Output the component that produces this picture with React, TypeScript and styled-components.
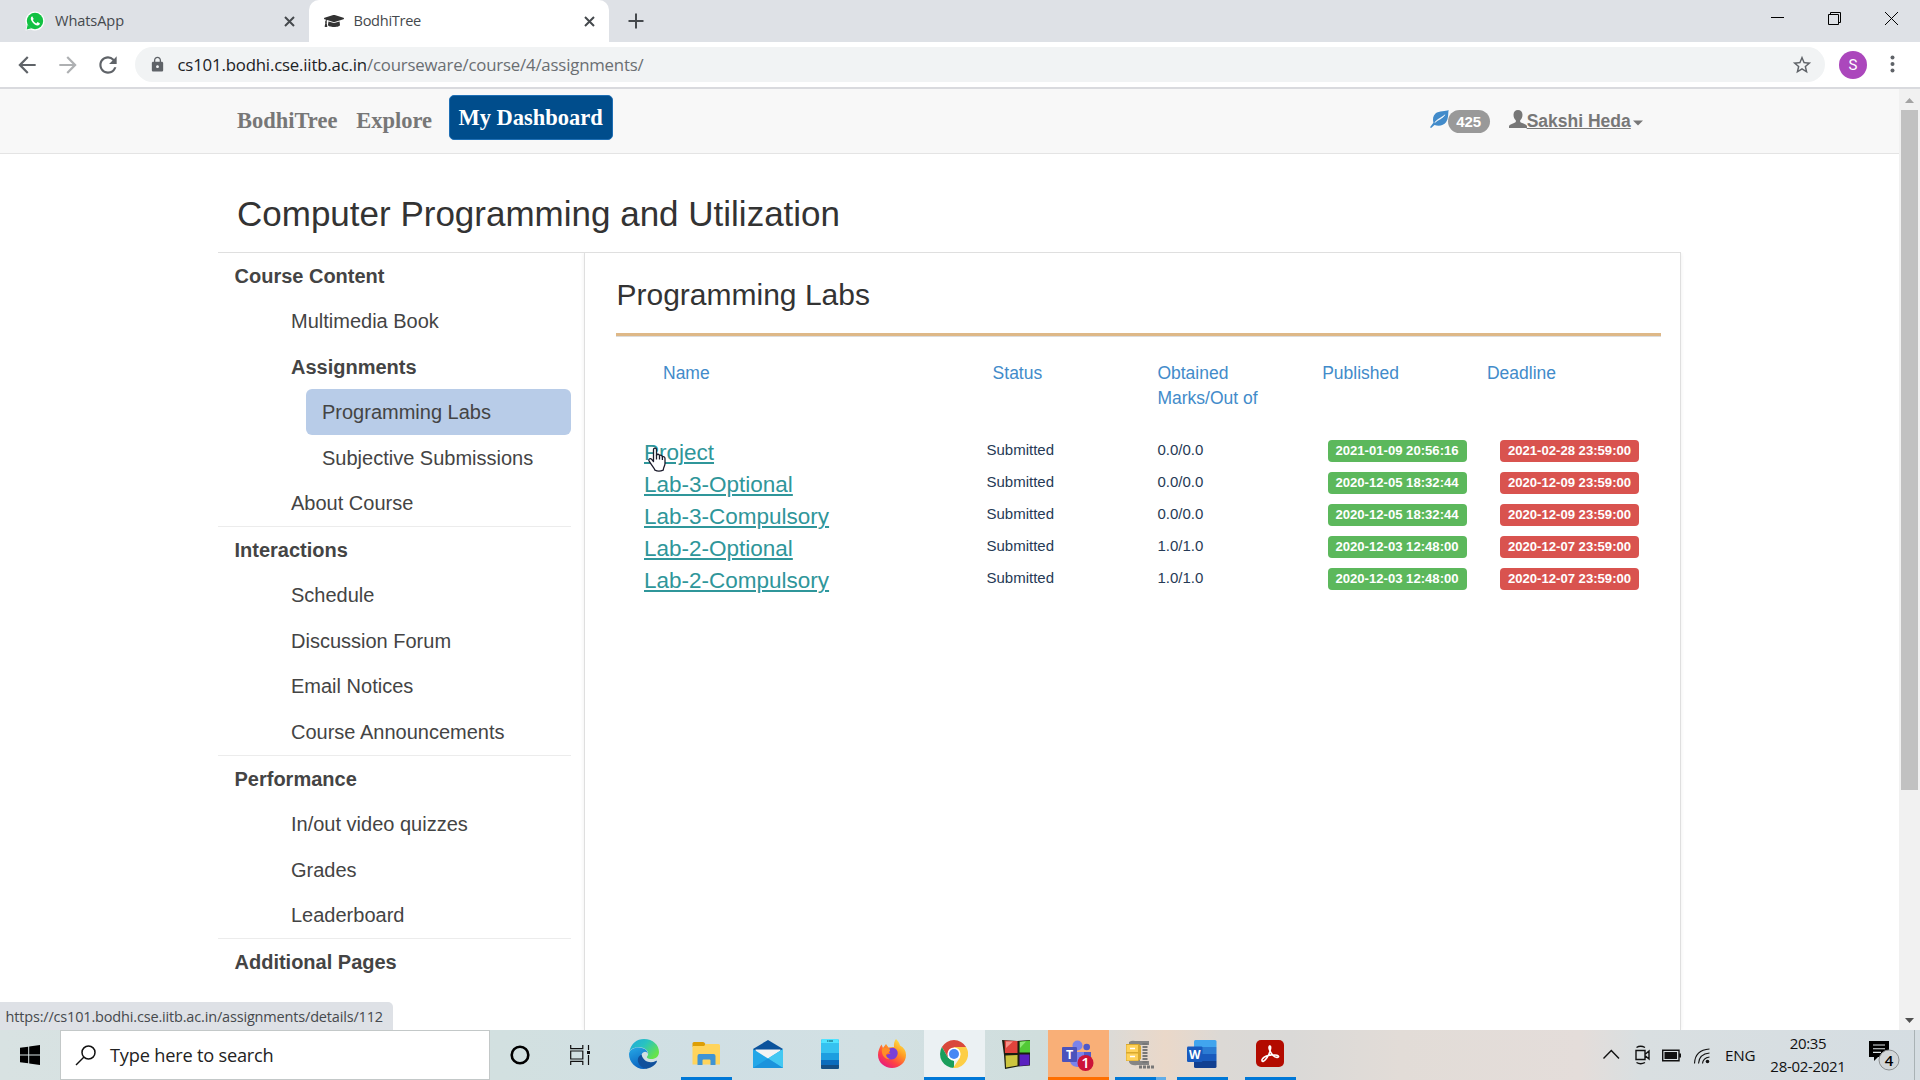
import React from "react";
import styled, { createGlobalStyle } from "styled-components";
import { FaGraduationCap } from "react-icons/fa";
import { MdArrowBack, MdArrowForward, MdLock, MdRefresh, MdStarBorder } from "react-icons/md";

const SEGOE = `"Open Sans", "Noto Sans", sans-serif`;
const ARIAL = `"Liberation Sans", Arial, sans-serif`;
const TIMES = `"Liberation Serif", "Times New Roman", serif`;

const Global = createGlobalStyle`
  * { box-sizing: border-box; }
  body { margin: 0; overflow: hidden; background: #fff; }
  svg { display: block; flex: none; }
`;

const Screen = styled.div`
  display: flex;
  flex-direction: column;
  width: 1920px;
  height: 1080px;
  font-family: ${ARIAL};
  overflow: hidden;
  position: relative;
`;

/* ---------- browser chrome ---------- */
const TabStrip = styled.div`
  display: flex;
  align-items: stretch;
  height: 42px;
  background: #dee1e6;
  flex: none;
`;
const Tab = styled.div<{ $active?: boolean; $width: number; $pad: number }>`
  display: flex;
  align-items: center;
  width: ${(p) => p.$width}px;
  padding: 0 14px 0 ${(p) => p.$pad}px;
  background: ${(p) => (p.$active ? "#fff" : "transparent")};
  border-radius: 10px 10px 0 0;
  color: #45494d;
`;
const TabTitle = styled.span<{ $track: number; $gap: number }>`
  flex: 1;
  margin: -2px 0 0 ${(p) => p.$gap}px;
  font: 14.6px/20px ${SEGOE};
  letter-spacing: ${(p) => p.$track}px;
  white-space: nowrap;
`;
const NewTab = styled.div`
  display: flex;
  align-items: center;
  padding-left: 19px;
  flex: 1;
`;
const WindowButtons = styled.div`
  display: flex;
  align-items: center;
  gap: 44px;
  padding: 0 22px 6px 0;
`;
const Toolbar = styled.div`
  display: flex;
  align-items: center;
  height: 47px;
  padding: 0 17px 2px 14px;
  background: #fff;
  border-bottom: 2px solid #d9dade;
  flex: none;
`;
const NavButtons = styled.div`
  display: flex;
  align-items: center;
  gap: 14.5px;
  width: 121px;
  color: #5f6368;
  padding-top: 2px;
`;
const Faded = styled.span`
  opacity: 0.5;
`;
const Omnibox = styled.div`
  display: flex;
  align-items: center;
  width: 1690px;
  height: 35px;
  margin-top: 2px;
  padding: 0 12px 0 14px;
  border-radius: 18px;
  background: #f1f3f4;
  color: #5f6368;
`;
const Url = styled.span`
  flex: 1;
  margin-left: 11.5px;
  font: 16.8px/24px ${SEGOE};
  letter-spacing: -0.18px;
  color: #6a6e72;
  white-space: nowrap;
  b { font-weight: 400; color: #202124; }
`;
const Avatar = styled.div`
  width: 28px;
  height: 28px;
  margin: 2px 23px 0 14px;
  border-radius: 50%;
  background: #ab47bc;
  color: #fff;
  font: 15px/28px Roboto, sans-serif;
  text-align: center;
`;

/* ---------- page ---------- */
const Body = styled.div`
  display: flex;
  height: 941px;
  flex: none;
`;
const Page = styled.div`
  flex: 1;
  background: #fff;
  overflow: hidden;
`;
const ScrollTrack = styled.div`
  display: flex;
  flex-direction: column;
  align-items: center;
  justify-content: space-between;
  width: 21px;
  padding: 0 0 7px;
  background: #f1f1f1;
`;
const ScrollTop = styled.div`
  display: flex;
  flex-direction: column;
  align-items: center;
  gap: 7px;
  padding-top: 9px;
`;
const ScrollThumb = styled.div`
  width: 17px;
  height: 680px;
  background: #c1c1c1;
`;
const Navbar = styled.header`
  display: flex;
  align-items: flex-start;
  height: 65px;
  padding: 6px 0 0 237px;
  background: #f8f8f8;
  border-bottom: 1px solid #e4e4e4;
`;
const NavLink = styled.a`
  margin: 6px 18.7px 0 0;
  font: bold 22.5px/40px ${TIMES};
  color: #777;
`;
const DashButton = styled.button`
  height: 45px;
  width: 164px;
  margin: 0 0 0 -2px;
  padding: 0;
  border: 1px solid #1f6fb5;
  border-radius: 5px;
  background: #004d8c;
  color: #fff;
  font: bold 22.5px/43px ${TIMES};
`;
const Account = styled.div`
  display: flex;
  align-items: flex-start;
  margin: 15px 0 0 817px;
  height: 23px;
`;
const Badge = styled.span`
  width: 42px;
  height: 23px;
  margin: 0 19px 0 -1px;
  border-radius: 12px;
  background: #999;
  color: #fff;
  font: bold 15px/24px ${ARIAL};
  text-align: center;
`;
const UserName = styled.span`
  font: bold 17.5px/22px ${ARIAL};
  color: #777;
  text-decoration: underline;
  text-decoration-thickness: 1px;
  white-space: nowrap;
`;
const Caret = styled.svg`
  margin-top: 10px;
`;
const Course = styled.main`
  width: 1463px;
  margin-left: 218px;
`;
const CourseTitle = styled.h1`
  margin: 0;
  height: 99px;
  padding: 22px 0 0 19px;
  border-bottom: 1px solid #dfdfdf;
  font-weight: 400;
  font-size: 35px;
  line-height: 76px;
  color: #333;
`;
const Columns = styled.div`
  display: flex;
  height: 777px;
`;
const Sidebar = styled.nav`
  width: 353px;
  margin-right: 13px;
`;
const Section = styled.section`
  padding-bottom: 0.5px;
  border-bottom: 1px solid #ececec;
  &:last-child { border-bottom: 0; }
`;
const Item = styled.div<{ $level: 0 | 1 | 2; $bold?: boolean; $selected?: boolean }>`
  margin-left: ${(p) => (p.$level === 2 ? 88 : 0)}px;
  padding: 0.8px 0 0 ${(p) => [16.5, 73, 16][p.$level]}px;
  font-size: 20px;
  line-height: 44.65px;
  font-weight: ${(p) => (p.$bold ? 700 : 400)};
  border-radius: 6px;
  background: ${(p) => (p.$selected ? "#b8cce8" : "transparent")};
  color: #444;
`;
const Panel = styled.section`
  flex: 1;
  padding: 12px 19px 0 31px;
  border: solid #dfdfdf;
  border-width: 0 1px;
  box-shadow: 0 0 4px rgba(0, 0, 0, 0.07);
  clip-path: inset(0 -6px 0 -6px);
`;
const PanelTitle = styled.h2`
  margin: 0 0 8px;
  padding-left: 0.5px;
  font-weight: 400;
  font-size: 30px;
  line-height: 60px;
  color: #333;
`;
const Rule = styled.div`
  height: 4px;
  background: #deb887;
  border-bottom: 1px solid #ddd;
`;
const HeadRow = styled.div`
  display: grid;
  grid-template-columns: 329.6px 164.8px 164.8px 164.8px 1fr;
  height: 99px;
  padding: 23.5px 0 0 47px;
  font-size: 17.5px;
  line-height: 25px;
  color: #428bca;
`;
const HeadCell = styled.div`
  width: 120px;
`;
const LabRow = styled.div`
  display: grid;
  grid-template-columns: 342.5px 171px 170px 172.5px 1fr;
  height: 32px;
  padding-left: 28px;
`;
const LabLink = styled.a`
  padding-top: 1px;
  font-size: 22.5px;
  line-height: 31px;
  color: #2f969a;
  text-decoration: underline;
  text-decoration-thickness: 2px;
  text-underline-offset: 2px;
`;
const Cell = styled.span`
  font-size: 15px;
  line-height: 27px;
  color: #263a56;
`;
const Label = styled.span<{ $color: string }>`
  width: 139px;
  height: 22px;
  margin-top: 4px;
  border-radius: 4px;
  background: ${(p) => p.$color};
  color: #fff;
  font-weight: 700;
  font-size: 13.125px;
  line-height: 21px;
  text-align: center;
  white-space: nowrap;
`;
const Pointer = styled.div`
  position: absolute;
  left: 647px;
  top: 447px;
`;
const StatusBubble = styled.div`
  position: absolute;
  left: 0;
  top: 1002px;
  width: 393px;
  height: 28px;
  padding-left: 5.5px;
  border-top-right-radius: 5px;
  background: #dee1e6;
  color: #46494d;
  font: 14.5px/29px ${SEGOE};
  letter-spacing: -0.17px;
  white-space: nowrap;
`;

/* ---------- taskbar ---------- */
const Taskbar = styled.footer`
  display: flex;
  align-items: stretch;
  height: 50px;
  flex: none;
  background: linear-gradient(90deg, #d8e2e2 0, #d2e0e0 500px, #d0dfe4 700px, #d2e0e3 870px, #d0dedd 1040px, #dcdad6 1112px, #ead8c9 1165px, #dcd9d5 1220px, #dad9d7 1290px, #e2dcd7 1400px, #e4ddda 1580px, #d9dfe1 1640px, #d5dde2 1920px);
`;
const Start = styled.div`
  display: flex;
  align-items: center;
  width: 60px;
  padding-left: 20px;
`;
const Search = styled.div`
  display: flex;
  align-items: center;
  width: 430px;
  padding-left: 14px;
  border: 1px solid #c3c8c8;
  background: #fff;
  font: 18.2px/24px ${SEGOE};
  letter-spacing: -0.2px;
  color: #222;
`;
const SearchText = styled.span`
  margin: 0 0 1px 14px;
`;
const Shell = styled.div`
  display: flex;
  align-items: center;
  width: 124px;
  padding-left: 20px;
  gap: 40px;
`;
const AppSlot = styled.div<{ $bg?: string; $bar?: string; $full?: boolean; $shift?: number }>`
  display: flex;
  flex-direction: column;
  align-items: center;
  justify-content: space-between;
  width: 61px;
  margin-right: 1px;
  margin-left: ${(p) => p.$shift ?? 0}px;
  padding-top: 9px;
  background: ${(p) => p.$bg ?? "transparent"};
  svg { margin-left: -1px; }
  &::after {
    content: "";
    width: ${(p) => (p.$full ? 61 : 51)}px;
    height: 3px;
    background: ${(p) => p.$bar ?? "transparent"};
  }
`;
const Tray = styled.div`
  display: flex;
  align-items: center;
  margin-left: auto;
  color: #111;
  font-family: ${SEGOE};
`;
const Lang = styled.span`
  width: 28px;
  margin: 0 17px 0 15px;
  font-size: 15.2px;
  letter-spacing: -0.2px;
`;
const Clock = styled.div`
  width: 76px;
  margin-right: 23px;
  font-size: 15px;
  line-height: 23px;
  letter-spacing: -0.3px;
  text-align: center;
  white-space: nowrap;
`;
const Peek = styled.div`
  width: 6px;
  height: 50px;
  margin-left: 13px;
  border-left: 1px solid #a9b2b5;
`;

const TabClose = () => (
  <svg width="11" height="11" viewBox="0 0 11 11" stroke="#45494d" strokeWidth="2">
    <path d="M1 1l9 9M10 1l-9 9" />
  </svg>
);
const Leaf = () => (
  <svg width="19" height="18" viewBox="0 0 19 18">
    <path d="M18.600 0C16 1.800 9 .3 5.500 3.600C2.900 6 2.600 9 3.400 12.800L0 17.200L1.100 18L4.500 14.900C8.400 16.500 13.500 15.800 16 12.300C18.600 8.600 18 4 18.600 0Z" fill="#428bca" />
    <path d="M4.800 12.600C7.500 8.800 11 8.200 15 4.800C12.600 8.900 8.400 9.200 4.800 12.600Z" fill="#fff" stroke="#fff" strokeWidth=".5" />
  </svg>
);
const Person = () => (
  <svg width="18" height="18" viewBox="0 0 18 18" fill="#777">
    <path d="M9 0C6.300 0 4.500 1.800 4.500 4.700C4.500 7.300 5.400 9 6.800 10.300V12C5.200 13.300 0 14.300 0 16.500V18H18V16.500C18 14.300 12.800 13.300 11.200 12V10.300C12.600 9 13.500 7.300 13.500 4.700C13.500 1.800 11.700 0 9 0Z" />
  </svg>
);
const Hand = () => (
  <svg width="20" height="25" viewBox="0 0 20 25">
    <path d="M6.500 14.500V2.800C6.500 .5 9.500 .5 9.500 2.800V8.200C10 6.700 12.400 7 12.500 8.700C13.200 7.700 15.300 8.200 15.400 9.900C16.300 9.100 18 9.800 18 11.500V16.500C18 19 16.500 20 16.200 23.200C13.500 24.300 10 24.200 8 23.200C7 20.200 3.500 17 2 13.700C1.300 11.700 3.500 10.900 4.700 12.300Z" fill="#fff" stroke="#1b1b2b" strokeWidth="1.300" strokeLinejoin="round" />
    <path d="M9.500 8v4.500M12.500 9v3.500M15.400 10v3" stroke="#1b1b2b" strokeWidth="1.300" />
  </svg>
);
const WindowsLogo = () => (
  <svg width="20" height="20" viewBox="0 0 20 20">
    <path d="M0 2.800L8.200 1.700V9.500H0ZM9.200 1.500L20 0V9.500H9.200ZM0 10.500H8.200V18.300L0 17.200ZM9.200 10.500H20V20L9.200 18.500Z" />
  </svg>
);
const TaskView = () => (
  <svg width="20" height="20" viewBox="0 0 20 20" fill="none" stroke="#111" strokeWidth="1.200">
    <path d="M.7 0V3.700H12.800V0M.7 20V16.300H12.800V20M.7 6H12.800V14H.7ZM18.500 0V5M18.500 10V20" />
    <path d="M17 6h3v3h-3z" fill="#111" stroke="none" />
  </svg>
);
const Edge = () => (
  <svg width="30" height="30" viewBox="0 0 30 30">
    <defs>
      <linearGradient id="edgeTop" x1="0" y1="0" x2="1" y2=".6">
        <stop offset="0" stopColor="#1fa7dd" /><stop offset=".5" stopColor="#29c3c0" /><stop offset="1" stopColor="#66e34b" />
      </linearGradient>
      <linearGradient id="edgeLeft" x1="0" y1="0" x2=".4" y2="1">
        <stop offset="0" stopColor="#27a9e6" /><stop offset="1" stopColor="#0a63c0" />
      </linearGradient>
    </defs>
    <path d="M.4 12.500C2 4.500 8 0 15 0C24 0 30 6 30 13C30 17.500 26.500 20 22.500 20C18.500 20 17 18.600 18.500 17C20.300 14.500 18.600 9.500 12.500 8.500C7.500 7.700 2.500 9 .4 12.500Z" fill="url(#edgeTop)" />
    <path d="M0 15C.5 10.500 5 8.300 10 8.500C15.500 8.700 18.900 11.800 18.900 15C18 12 14 12 12.600 15.500C10.500 21.500 15.500 26.500 21.500 26C19 29 17 30 14.500 30C6.500 30 0 23 0 15Z" fill="url(#edgeLeft)" />
    <path d="M12.500 15.500C9.500 17 8 20 9.300 23.500C11 28 15.500 30 18.500 29.600C23 28.500 26 26 27.800 23C28.200 22 27.500 21.600 26.800 22C22 24.500 14.500 23.500 12.500 15.500Z" fill="#10509c" />
  </svg>
);
const Explorer = () => (
  <svg width="28" height="30" viewBox="0 0 28 30">
    <path d="M.5 4.500Q.5 3 2 3H11Q12.500 3 13 4.500L14 8H.5Z" fill="#dd9e05" />
    <path d="M.5 7H12L14 5H26.500Q28 5 28 6.500V25.500H.5Z" fill="#ffd45c" />
    <path d="M5.500 26V17Q5.500 15 7.500 15H21.500Q23.500 15 23.500 17V26H18.500V21.500Q18.500 20.500 17.500 20.500H11.500Q10.500 20.500 10.500 21.500V26Z" fill="#3f94d4" />
  </svg>
);
const Mail = () => (
  <svg width="30" height="30" viewBox="0 0 30 30">
    <path d="M0 10L15 1L30 10L29 13H1Z" fill="#0b539c" />
    <path d="M2.500 10.500H27.500V20H2.500Z" fill="#f3f3f3" />
    <path d="M0 10L15 19.500L30 10V29H0Z" fill="#23a7e8" />
    <path d="M15 19.500L30 10V29Z" fill="#43c8f2" />
    <path d="M0 29L15 19.500L30 29Z" fill="#1b93dc" />
  </svg>
);
const Phone = () => (
  <svg width="18" height="30" viewBox="0 0 18 30">
    <rect width="18" height="30" rx="1.500" fill="#36c2f0" />
    <path d="M1 0H17L18 4H0Z" fill="#50e4ff" />
    <path d="M0 14h18v7H0z" fill="#1d9ee0" />
    <path d="M0 21h18v5H0z" fill="#0a6cbd" />
    <path d="M0 26h18v2.500Q18 30 16.500 30H1.500Q0 30 0 28.500z" fill="#134f85" />
    <path d="M6 2h1.500M8 2h4" stroke="#0b5468" strokeWidth="1" />
  </svg>
);
const Firefox = () => (
  <svg width="28" height="30" viewBox="0 0 28 30">
    <defs>
      <linearGradient id="fox" x1=".9" y1="0" x2=".2" y2="1">
        <stop offset="0" stopColor="#fff44f" /><stop offset=".4" stopColor="#ff9a22" /><stop offset=".7" stopColor="#ff4344" /><stop offset="1" stopColor="#e31587" />
      </linearGradient>
    </defs>
    <path d="M18 0C20 2 21.500 4 22 6.500C26 8.500 28 12 28 16C28 23.500 21.500 29 14 29C6.500 29 0 23.500 0 16C0 12 1.500 8.500 3.500 5.500L5 9L8 5L10.500 8.500L16 8C15.500 4.500 16.500 2 18 0Z" fill="url(#fox)" />
    <path d="M9 11.500C12 8 17.500 7 19.500 12.500C20.500 17 17 20.500 13.500 20.500C10.500 20.500 8.500 18.500 8 16L12.500 14.500Z" fill="#7a3fd8" />
    <path d="M4 9.500C7 8 9 9.500 12 10.500C12.500 12.500 10 14 8 15.500C8 18 10 19.500 12 20C7 21 3 16 4 9.500Z" fill="#ff8f26" />
  </svg>
);
const Chrome = () => (
  <svg width="28" height="30" viewBox="0 0 28 30">
    <g transform="translate(0 1)">
      <path d="M1.900 7A14 14 0 0 1 26.100 7L14 7.500L7.900 17.500Z" fill="#d9483b" />
      <path d="M1.900 7L7.900 17.500L14 21L14 28A14 14 0 0 1 1.900 7Z" fill="#1a9e5b" />
      <path d="M26.100 7A14 14 0 0 1 13 28L20 17.500L14 7Z" fill="#fdce45" />
      <circle cx="14" cy="14" r="6.600" fill="#fff" />
      <circle cx="14" cy="14" r="5" fill="#4688f4" />
    </g>
  </svg>
);
const Cubes = () => (
  <svg width="30" height="30" viewBox="0 0 30 30">
    <path d="M1 1L16 2L29 1V26.500L17 27.500L4 30L3 16Z" fill="#1b1d10" />
    <path d="M3.500 1.500L16.500 2V14H4Z" fill="#e0433c" /><path d="M18.500 2.500L29 1.500V13.500H18.500Z" fill="#52c935" />
    <path d="M4.500 16.500L16.500 16V26.500L5 28.500Z" fill="#cdc53f" /><path d="M18.500 15.500H28.500V26L18.500 27Z" fill="#5a20bf" />
    <path d="M5 2.500H12L5 9Z" fill="#f69288" /><path d="M19 3L25 2.500L19 9Z" fill="#8ce873" />
  </svg>
);
const Teams = () => (
  <svg width="32" height="32" viewBox="0 0 32 32">
    <circle cx="15.500" cy="6.500" r="5" fill="#7b83eb" /><circle cx="24.700" cy="8" r="3.300" fill="#5059c9" />
    <path d="M20 13H29V22Q25 27 20 24Z" fill="#5059c9" />
    <path d="M8 13H22V22Q21 28 15 28Q8 27 8 21Z" fill="#7b83eb" />
    <rect y="8" width="15" height="15" rx="1" fill="#4b53bc" />
    <text x="7.500" y="20" fontFamily="Open Sans, sans-serif" fontWeight="700" fontSize="12.500" fill="#fff" textAnchor="middle">T</text>
    <circle cx="23.500" cy="24" r="8" fill="#cc1338" />
    <text x="23.500" y="29" fontFamily="Open Sans, sans-serif" fontWeight="600" fontSize="15" fill="#fff" textAnchor="middle">1</text>
  </svg>
);
const Zip = () => (
  <svg width="30" height="30" viewBox="0 0 30 30">
    <path d="M4 3Q7 1 10 2H24V6H15V22H24V26H12Q6 27 4 23Z" fill="#858585" />
    <path d="M20 4V25" stroke="#777" strokeWidth="5" strokeDasharray="2 1" />
    <path d="M14 28H29" stroke="#777" strokeWidth="3" strokeDasharray="3 1" />
    <path d="M1 5H14L16 7V20L13 22H1Z" fill="#d9a92e" />
    <path d="M1.500 6H13V13H1.500ZM1.500 14.500H13V21.500H1.500Z" fill="#ffd25a" />
    <path d="M5 9.500H10M5 17.500H10" stroke="#fff" strokeWidth="1.500" />
  </svg>
);
const Word = () => (
  <svg width="30" height="30" viewBox="0 0 30 30">
    <path d="M7 2.500Q7 1 8.500 1H28Q29.500 1 29.500 2.500V8H7Z" fill="#41a5ee" />
    <path d="M7 8h22.500v7H7z" fill="#2b7cd3" /><path d="M7 15h22.500v7H7z" fill="#185abd" />
    <path d="M7 22h22.500v5.500Q29.500 29 28 29H8.500Q7 29 7 27.500z" fill="#103f91" />
    <rect y="7.500" width="15.500" height="15.500" rx="1.200" fill="#185abd" />
    <text x="7.700" y="19.500" fontFamily="Open Sans, sans-serif" fontWeight="700" fontSize="12" fill="#fff" textAnchor="middle">W</text>
  </svg>
);
const Acrobat = () => (
  <svg width="28" height="30" viewBox="0 0 28 30">
    <rect y="1" width="28" height="27" rx="5" fill="#b30b00" />
    <path d="M6 20.500C8 16.500 15 15 21 16.300C25 17.800 20.500 20 17 16.500C14 13 12 8.500 13.500 7C15.500 6.500 14.500 11.500 13 15C11 19.500 7.500 23.500 6 22Z" fill="none" stroke="#fff" strokeWidth="1.600" strokeLinejoin="round" />
  </svg>
);
const TrayIcons = () => (
  <svg width="107" height="20" viewBox="0 0 107 20" fill="none" stroke="#111" strokeWidth="1.400">
    <path d="M.5 13.500L8.300 5.500L16 13.500" />
    <path d="M33 5.500H42V14.500H33ZM42.500 9L46 6V14L42.500 11M33.500 2.500Q37.500 0 42 2.500M33.500 17.500Q37.500 20 42 17.500" />
    <path d="M59.700 5.200H76V15.800H59.700ZM77.300 8.500V12.500" />
    <path d="M61.500 7h12.500v7h-12.500z" fill="#111" stroke="none" />
    <path d="M91.500 18.500Q92 5 106.500 4M95.500 18.500Q96 9 106.500 8M99.500 18.500Q100 13 106.500 12" strokeWidth="1.100" />
    <circle cx="104.500" cy="16.500" r="1.800" fill="#111" stroke="none" />
  </svg>
);
const Notifications = () => (
  <svg width="32" height="32" viewBox="0 0 32 32">
    <path d="M0 2H20V18H9L5 22V18H0Z" fill="#000" />
    <path d="M4 6H16M4 9.700H16M4 13.400H12" stroke="#dfe6e8" strokeWidth="1.100" />
    <circle cx="20" cy="21" r="10" fill="#d2d6d8" stroke="#8c8f91" />
    <text x="20" y="26.500" fontFamily="Open Sans, sans-serif" fontWeight="600" fontSize="15" textAnchor="middle">4</text>
  </svg>
);

type Entry = { text: string; level: 0 | 1 | 2; bold?: boolean; selected?: boolean };
const sections: Entry[][] = [
  [
    { text: "Course Content", level: 0, bold: true },
    { text: "Multimedia Book", level: 1 },
    { text: "Assignments", level: 1, bold: true },
    { text: "Programming Labs", level: 2, selected: true },
    { text: "Subjective Submissions", level: 2 },
    { text: "About Course", level: 1 },
  ],
  [
    { text: "Interactions", level: 0, bold: true },
    { text: "Schedule", level: 1 },
    { text: "Discussion Forum", level: 1 },
    { text: "Email Notices", level: 1 },
    { text: "Course Announcements", level: 1 },
  ],
  [
    { text: "Performance", level: 0, bold: true },
    { text: "In/out video quizzes", level: 1 },
    { text: "Grades", level: 1 },
    { text: "Leaderboard", level: 1 },
  ],
  [{ text: "Additional Pages", level: 0, bold: true }],
];

const labs = [
  ["Project", "0.0/0.0", "2021-01-09 20:56:16", "2021-02-28 23:59:00"],
  ["Lab-3-Optional", "0.0/0.0", "2020-12-05 18:32:44", "2020-12-09 23:59:00"],
  ["Lab-3-Compulsory", "0.0/0.0", "2020-12-05 18:32:44", "2020-12-09 23:59:00"],
  ["Lab-2-Optional", "1.0/1.0", "2020-12-03 12:48:00", "2020-12-07 23:59:00"],
  ["Lab-2-Compulsory", "1.0/1.0", "2020-12-03 12:48:00", "2020-12-07 23:59:00"],
];

export default function App() {
  return (
    <Screen>
      <Global />
      <TabStrip>
        <Tab $width={309} $pad={25}>
          <svg width="20" height="20" viewBox="0 0 20 20">
            <path d="M10 .5A9.500 9.500 0 1 1 5.500 18.400L.5 19.600L1.800 14.800A9.500 9.500 0 0 1 10 .5Z" fill="#fff" />
            <circle cx="10" cy="10" r="8.200" fill="#12c143" />
            <path d="M1.600 18.400L2.700 13.500L6.500 17.300Z" fill="#12c143" />
            <path d="M7.200 5.200C5.500 6 5.400 8 6.600 10C8 12.500 10.500 14.500 12.700 14.500C14 14.400 15 13.500 14.800 12.300L12.500 11.100L11.300 12.400C9.700 11.800 8.500 10.500 7.900 9.100L8.700 7.900Z" fill="#fff" />
          </svg>
          <TabTitle $track={-0.1} $gap={10}>WhatsApp</TabTitle>
          <TabClose />
        </Tab>
        <Tab $width={300} $pad={15} $active>
          <FaGraduationCap size={20} color="#333" />
          <TabTitle $track={-0.3} $gap={9.5}>BodhiTree</TabTitle>
          <TabClose />
        </Tab>
        <NewTab>
          <svg width="16" height="16" viewBox="0 0 16 16" stroke="#45494d" strokeWidth="2">
            <path d="M8 .5v15M.5 8h15" />
          </svg>
        </NewTab>
        <WindowButtons>
          <svg width="13" height="13" viewBox="0 0 13 13"><path d="M0 5.500h13" stroke="#000" /></svg>
          <svg width="13" height="13" viewBox="0 0 13 13" fill="none" stroke="#000">
            <path d="M.5 2.500h10v10H.5zM2.500 2.500v-2h10v10h-2" />
          </svg>
          <svg width="13" height="13" viewBox="0 0 13 13" stroke="#000"><path d="M0 0l13 13M13 0L0 13" /></svg>
        </WindowButtons>
      </TabStrip>
      <Toolbar>
        <NavButtons>
          <MdArrowBack size={26} />
          <Faded><MdArrowForward size={26} /></Faded>
          <MdRefresh size={26} />
        </NavButtons>
        <Omnibox>
          <MdLock size={17} />
          <Url><b>cs101.bodhi.cse.iitb.ac.in</b>/courseware/course/4/assignments/</Url>
          <MdStarBorder size={22} />
        </Omnibox>
        <Avatar>S</Avatar>
        <svg width="5" height="18" viewBox="0 0 5 18" fill="#5f6368">
          <circle cx="2.500" cy="2.500" r="2" /><circle cx="2.500" cy="9" r="2" /><circle cx="2.500" cy="15.500" r="2" />
        </svg>
      </Toolbar>
      <Body>
        <Page>
          <Navbar>
            <NavLink>BodhiTree</NavLink>
            <NavLink>Explore</NavLink>
            <DashButton>My Dashboard</DashButton>
            <Account>
              <Leaf />
              <Badge>425</Badge>
              <Person />
              <UserName>Sakshi Heda</UserName>
              <Caret width="12" height="6" viewBox="0 0 12 6"><path d="M2 0.500H12L7 5.500Z" fill="#777" /></Caret>
            </Account>
          </Navbar>
          <Course>
            <CourseTitle>Computer Programming and Utilization</CourseTitle>
            <Columns>
              <Sidebar>
                {sections.map((items, i) => (
                  <Section key={i}>
                    {items.map((e) => (
                      <Item key={e.text} $level={e.level} $bold={e.bold} $selected={e.selected}>{e.text}</Item>
                    ))}
                  </Section>
                ))}
              </Sidebar>
              <Panel>
                <PanelTitle>Programming Labs</PanelTitle>
                <Rule />
                <HeadRow>
                  <HeadCell>Name</HeadCell>
                  <HeadCell>Status</HeadCell>
                  <HeadCell>Obtained Marks/Out of</HeadCell>
                  <HeadCell>Published</HeadCell>
                  <HeadCell>Deadline</HeadCell>
                </HeadRow>
                {labs.map(([name, marks, published, deadline]) => (
                  <LabRow key={name}>
                    <LabLink>{name}</LabLink>
                    <Cell>Submitted</Cell>
                    <Cell>{marks}</Cell>
                    <Label $color="#5cb85c">{published}</Label>
                    <Label $color="#d9534f">{deadline}</Label>
                  </LabRow>
                ))}
              </Panel>
            </Columns>
          </Course>
        </Page>
        <ScrollTrack>
          <ScrollTop>
            <svg width="9" height="5" viewBox="0 0 9 5"><path d="M0 5L4.500 0L9 5Z" fill="#a3a3a3" /></svg>
            <ScrollThumb />
          </ScrollTop>
          <svg width="9" height="5" viewBox="0 0 9 5"><path d="M0 0L4.500 5L9 0Z" fill="#505050" /></svg>
        </ScrollTrack>
      </Body>
      <Taskbar>
        <Start><WindowsLogo /></Start>
        <Search>
          <svg width="21" height="21" viewBox="0 0 21 21" fill="none" stroke="#111" strokeWidth="1.500">
            <circle cx="13.500" cy="7.500" r="6.500" /><path d="M9 12L1 20" />
          </svg>
          <SearchText>Type here to search</SearchText>
        </Search>
        <Shell>
          <svg width="20" height="20" viewBox="0 0 20 20"><circle cx="10" cy="10" r="8.300" fill="none" stroke="#000" strokeWidth="2.600" /></svg>
          <TaskView />
        </Shell>
        <AppSlot><Edge /></AppSlot>
        <AppSlot $bar="#0078d7"><Explorer /></AppSlot>
        <AppSlot><Mail /></AppSlot>
        <AppSlot><Phone /></AppSlot>
        <AppSlot><Firefox /></AppSlot>
        <AppSlot $bar="#0078d7" $bg="#ebf1f3" $full><Chrome /></AppSlot>
        <AppSlot><Cubes /></AppSlot>
        <AppSlot $bar="#ff6f00" $bg="#f9af77" $full><Teams /></AppSlot>
        <AppSlot $bar="linear-gradient(90deg, #0078d7 41px, #62ade8 41px)"><Zip /></AppSlot>
        <AppSlot $bar="#0078d7"><Word /></AppSlot>
        <AppSlot $bar="#0078d7" $shift={6}><Acrobat /></AppSlot>
        <Tray>
          <TrayIcons />
          <Lang>ENG</Lang>
          <Clock>20:35<br />28-02-2021</Clock>
          <Notifications />
          <Peek />
        </Tray>
      </Taskbar>
      <StatusBubble>https://cs101.bodhi.cse.iitb.ac.in/assignments/details/112</StatusBubble>
      <Pointer><Hand /></Pointer>
    </Screen>
  );
}
